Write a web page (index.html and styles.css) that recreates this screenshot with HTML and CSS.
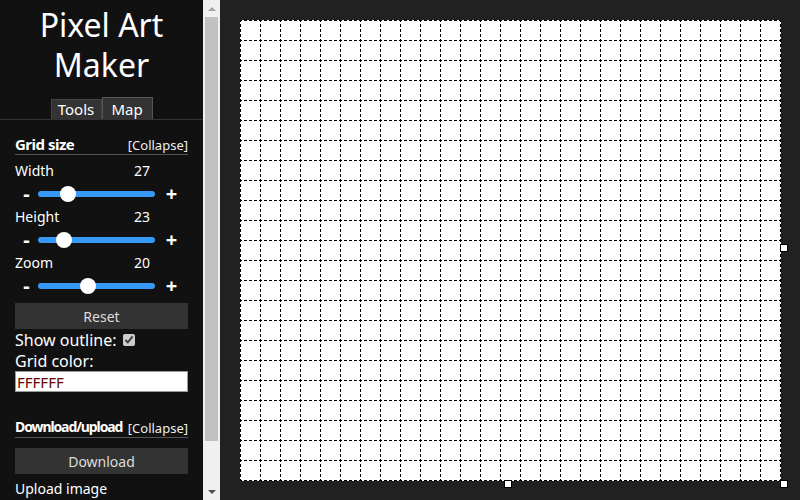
FILE: index.html
```html
<!DOCTYPE html>
<html>
<head>
<meta charset="utf-8">
<title>Pixel Art Maker</title>
<link rel="stylesheet" href="styles.css">
</head>
<body>
<aside class="sidebar">
  <div class="sidebar-content">
    <h1 class="title">Pixel Art Maker</h1>
    <nav class="tabs">
      <span class="tab">Tools</span><span class="tab tab-active">Map</span>
    </nav>
    <section class="panel">
      <div class="panel-head">
        <h2 class="panel-title">Grid size</h2>
        <span class="collapse">[Collapse]</span>
      </div>
      <div class="fields">
        <div class="field">
          <div class="field-label"><span>Width</span><span class="value">27</span></div>
          <div class="slider-row"><span class="step">-</span><input class="slider" type="range" min="5" max="105" value="27"><span class="step">+</span></div>
        </div>
        <div class="field">
          <div class="field-label"><span>Height</span><span class="value">23</span></div>
          <div class="slider-row"><span class="step">-</span><input class="slider" type="range" min="5" max="105" value="23"><span class="step">+</span></div>
        </div>
        <div class="field">
          <div class="field-label"><span>Zoom</span><span class="value">20</span></div>
          <div class="slider-row"><span class="step">-</span><input class="slider" type="range" min="5" max="41" value="20"><span class="step">+</span></div>
        </div>
      </div>
      <button class="btn">Reset</button>
      <label class="option option-outline">Show outline: <input class="check" type="checkbox" checked></label>
      <div class="option">Grid color:</div>
      <input class="color-input" type="text" value="FFFFFF">
    </section>
    <section class="panel panel-dl">
      <div class="panel-head">
        <h2 class="panel-title">Download/upload</h2>
        <span class="collapse">[Collapse]</span>
      </div>
      <button class="btn">Download</button>
      <div class="upload">Upload image</div>
      <div class="upload">Max size is 30 x 30</div>
    </section>
  </div>
  <div class="scrollbar">
    <span class="sb-btn"><i class="arrow arrow-up"></i></span>
    <span class="sb-track"><span class="sb-thumb"></span></span>
    <span class="sb-btn"><i class="arrow arrow-down"></i></span>
  </div>
</aside>
<main class="stage">
  <div class="board">
    <span class="handle handle-right"></span>
    <span class="handle handle-bottom"></span>
    <span class="handle handle-corner"></span>
  </div>
</main>
</body>
</html>
```
FILE: styles.css
```css
* { box-sizing: border-box; }
html, body { margin: 0; height: 500px; }
body {
  display: flex;
  overflow: hidden;
  font-family: "Noto Sans", "Open Sans", sans-serif;
  color: #fff;
  background: #212121;
}
.sidebar {
  display: flex;
  width: 220px;
  flex: 0 0 220px;
  height: 500px;
  background: #111;
}
.sidebar-content {
  width: 203px;
  flex: 0 0 203px;
  height: 500px;
  overflow: hidden;
}
.scrollbar {
  display: flex;
  flex-direction: column;
  width: 17px;
  height: 500px;
  background: #f0f0f0;
}
.sb-btn {
  display: flex;
  align-items: center;
  justify-content: center;
  height: 17px;
  flex: 0 0 17px;
}
.sb-track {
  flex: 1;
  padding: 0 2px;
}
.sb-thumb {
  display: block;
  height: 424px;
  background: #c1c1c1;
}
.arrow {
  width: 0;
  height: 0;
  border-left: 4px solid transparent;
  border-right: 4px solid transparent;
}
.arrow-up { border-bottom: 4px solid #a3a3a3; margin-top: 1px; }
.arrow-down { border-top: 4px solid #505050; margin-top: 1px; }
.title {
  margin: 0;
  padding-top: 5px;
  font-size: 32px;
  font-weight: 400;
  line-height: 40px;
  text-align: center;
}
.tabs {
  display: flex;
  justify-content: center;
  align-items: flex-end;
  height: 35px;
  border-bottom: 1px solid #333;
}
.tab {
  display: block;
  width: 51px;
  height: 20px;
  line-height: 19px;
  font-size: 15px;
  text-align: center;
  background: #333;
  border: 1px solid #444;
  border-bottom: 0;
}
.tab-active {
  height: 22px;
  line-height: 22px;
  border-color: #555;
}
.panel {
  padding: 14px 15px 0;
}
.panel-head {
  display: flex;
  justify-content: space-between;
  align-items: flex-end;
  border-bottom: 1px solid #555;
}
.panel-title {
  margin: 0;
  font-size: 15px;
  font-weight: 700;
  line-height: 20px;
  letter-spacing: -0.5px;
}
.collapse {
  font-size: 13px;
  line-height: 18px;
  color: #eee;
}
.fields { padding-top: 6px; }
.field-label {
  display: flex;
  justify-content: space-between;
  font-size: 14px;
  line-height: 20px;
  padding-right: 38px;
}
.slider-row {
  display: flex;
  align-items: center;
  height: 26px;
}
.step {
  width: 23px;
  text-align: center;
  font-size: 20px;
  font-weight: 700;
  line-height: 20px;
}
.step:last-child { width: 33px; }
.slider {
  -webkit-appearance: none;
  appearance: none;
  margin: 0;
  width: 117px;
  height: 6px;
  border-radius: 3px;
  background: #3898f8;
  outline: none;
}
.slider::-webkit-slider-thumb {
  -webkit-appearance: none;
  appearance: none;
  width: 16px;
  height: 16px;
  border-radius: 50%;
  background: #fff;
  border: 0;
}
.btn {
  display: block;
  width: 100%;
  height: 26px;
  margin-top: 4px;
  border: 0;
  background: #333;
  color: #ddd;
  font-family: inherit;
  font-size: 14px;
}
.option {
  display: flex;
  align-items: center;
  gap: 6px;
  font-size: 16px;
  line-height: 20px;
}
.option-outline { line-height: 22px; }
.check {
  margin: 0;
  width: 12px;
  height: 12px;
  accent-color: #ccc;
}
.color-input {
  display: block;
  width: 100%;
  height: 21px;
  margin: 0;
  padding: 0 1px;
  border: 1px solid #999;
  font-family: inherit;
  font-size: 15px;
  color: #600;
  background: #fff;
  outline: none;
}
.panel-dl { padding-top: 25px; padding-bottom: 40px; }
.panel-dl .panel-title { font-size: 14px; letter-spacing: -1.1px; }
.panel-dl .btn { margin-top: 10px; }
.upload {
  font-size: 14px;
  line-height: 19px;
  margin-top: 5px;
}
.upload + .upload { margin-top: 0; }
.stage {
  flex: 1;
  padding: 20px;
  background: #212121;
}
.board {
  position: relative;
  width: 541px;
  height: 461px;
  background: #fff;
}
.board::before,
.board::after {
  content: "";
  position: absolute;
  inset: 0;
  pointer-events: none;
}
.board::before {
  background: repeating-linear-gradient(to right, #000 0 1px, transparent 1px 20px);
  -webkit-mask-image: repeating-linear-gradient(to bottom, #000 0 2px, transparent 2px 4px, #000 4px 5px);
  mask-image: repeating-linear-gradient(to bottom, #000 0 2px, transparent 2px 4px, #000 4px 5px);
}
.board::after {
  background: repeating-linear-gradient(to bottom, #000 0 1px, transparent 1px 20px);
  -webkit-mask-image: repeating-linear-gradient(to right, #000 0 2px, transparent 2px 4px, #000 4px 5px);
  mask-image: repeating-linear-gradient(to right, #000 0 2px, transparent 2px 4px, #000 4px 5px);
}
.handle {
  position: absolute;
  z-index: 1;
  width: 8px;
  height: 8px;
  background: #fff;
  border: 1px solid #000;
}
.handle-right { left: 540px; top: calc(50% - 7px); }
.handle-bottom { top: 460px; left: calc(50% - 7px); }
.handle-corner { left: 540px; top: 460px; }
```
